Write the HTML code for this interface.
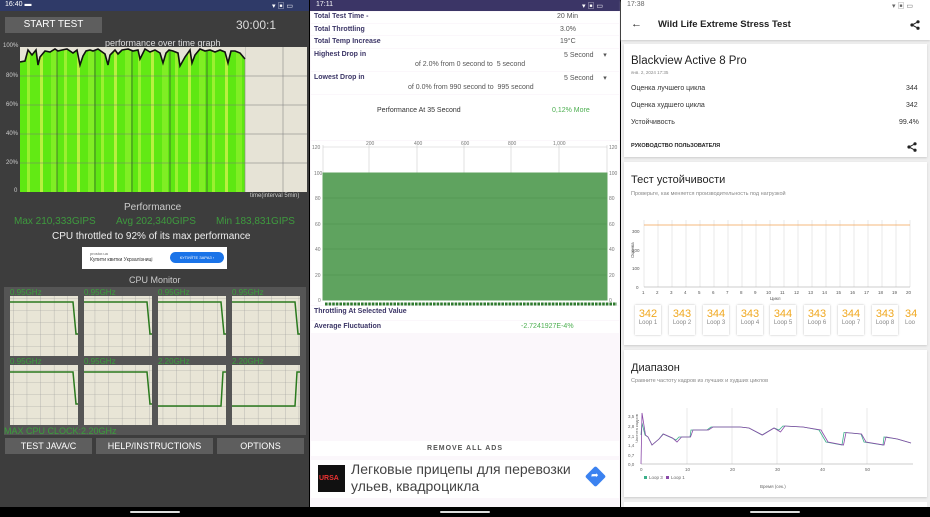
<!DOCTYPE html>
<html><head><meta charset="utf-8"><style>
*{margin:0;padding:0;box-sizing:border-box}
body{width:930px;height:517px;overflow:hidden;position:relative;font-family:"Liberation Sans","Noto Sans CJK SC",sans-serif;background:#000}
.a{position:absolute;white-space:nowrap}
</style></head><body>
<!-- LEFT PANEL -->
<div class="a" style="left:0;top:0;width:309px;height:507px;background:#3d3d3d"></div>
<div class="a" style="left:0;top:0;width:309px;height:11px;background:#2f3a68"></div>
<div class="a" style="left:5px;top:1px;font-size:7px;color:#fff">16:40 ▬</div>
<div class="a" style="left:272px;top:1px;font-size:7px;color:#fff">▾ ▣ ▭</div>
<div class="a" style="left:5px;top:17px;width:97px;height:16px;background:#5e5e5e;color:#fff;font-size:10px;text-align:center;line-height:16px">START TEST</div>
<div class="a" style="left:236px;top:18px;font-size:12px;color:#ddd">30:00:1</div>
<div class="a" style="left:105px;top:38px;font-size:9px;color:#ddd">performance over time graph</div>
<div class="a" style="left:20px;top:47px;width:287px;height:145px;background:#e6e3d6"></div>
<div class="a" style="left:20px;top:47px;width:225px;height:145px;background:repeating-linear-gradient(90deg,#5ee812 0 7px,#9af030 7px 10px,#62ea14 10px 20px,#b8f040 20px 23px,#5ee812 23px 31px,#80ee24 31px 37px)"></div>
<svg class="a" style="left:20px;top:47px" width="287" height="145">
<g stroke="#777" stroke-width="0.5"><line x1="0" y1="29" x2="287" y2="29"/><line x1="0" y1="58" x2="287" y2="58"/><line x1="0" y1="87" x2="287" y2="87"/><line x1="0" y1="116" x2="287" y2="116"/></g>
<g stroke="#333" stroke-width="0.6"><line x1="37" y1="0" x2="37" y2="145"/><line x1="75" y1="0" x2="75" y2="145"/><line x1="112" y1="0" x2="112" y2="145"/><line x1="150" y1="0" x2="150" y2="145"/><line x1="187" y1="0" x2="187" y2="145"/></g>
<g stroke="#888" stroke-width="0.6"><line x1="225" y1="0" x2="225" y2="145"/><line x1="263" y1="0" x2="263" y2="145"/></g>
<polygon fill="#e6e3d6" points="0,0 0,15 5,14 8,3 12,8 16,3 18,18 20,10 25,4 30,5 35,2 38,4 42,3 47,2 53,6 57,3 60,18 63,9 66,4 70,3 73,4 78,2 85,7 88,18 90,8 95,3 98,7 102,3 108,2 113,4 118,3 120,12 125,2 130,5 135,3 140,6 143,16 146,6 149,3 153,4 158,6 160,19 165,10 170,3 172,16 175,8 180,2 185,4 190,3 195,5 200,3 205,5 208,16 211,4 215,4 220,6 225,12 225,0"/>
<polyline fill="none" stroke="#111" stroke-width="1.6" points="0,15 5,14 8,3 12,8 16,3 18,18 20,10 25,4 30,5 35,2 38,4 42,3 47,2 53,6 57,3 60,18 63,9 66,4 70,3 73,4 78,2 85,7 88,18 90,8 95,3 98,7 102,3 108,2 113,4 118,3 120,12 125,2 130,5 135,3 140,6 143,16 146,6 149,3 153,4 158,6 160,19 165,10 170,3 172,16 175,8 180,2 185,4 190,3 195,5 200,3 205,5 208,16 211,4 215,4 220,6 225,12"/>
</svg>
<div class="a" style="left:3px;top:43px;font-size:6px;color:#ccc">100%</div>
<div class="a" style="left:6px;top:73px;font-size:6px;color:#ccc">80%</div>
<div class="a" style="left:6px;top:102px;font-size:6px;color:#ccc">60%</div>
<div class="a" style="left:6px;top:131px;font-size:6px;color:#ccc">40%</div>
<div class="a" style="left:6px;top:160px;font-size:6px;color:#ccc">20%</div>
<div class="a" style="left:14px;top:188px;font-size:6px;color:#ccc">0</div>
<div class="a" style="left:250px;top:193px;font-size:6px;color:#ccc">time(interval 5min)</div>
<div class="a" style="left:124px;top:202px;font-size:10px;color:#ccc">Performance</div>
<div class="a" style="left:14px;top:216px;font-size:10px;color:#3e9a3e">Max 210,333GIPS</div>
<div class="a" style="left:116px;top:216px;font-size:10px;color:#3e9a3e">Avg 202,340GIPS</div>
<div class="a" style="left:216px;top:216px;font-size:10px;color:#3e9a3e">Min 183,831GIPS</div>
<div class="a" style="left:52px;top:231px;font-size:10px;color:#eee">CPU throttled to 92% of its max performance</div>
<div class="a" style="left:82px;top:247px;width:145px;height:22px;background:#fff"></div>
<div class="a" style="left:90px;top:251px;font-size:4px;color:#666">prostor.ua</div>
<div class="a" style="left:90px;top:257px;font-size:5px;color:#333">Купити квитки Укрзалізниці</div>
<div class="a" style="left:170px;top:252px;width:54px;height:11px;background:#1a73e8;border-radius:6px;color:#fff;font-size:4px;text-align:center;line-height:11px">КУПУЙТЕ ЗАРАЗ ›</div>
<div class="a" style="left:129px;top:275px;font-size:9px;color:#ccc">CPU Monitor</div>
<div class="a" style="left:4px;top:287px;width:302px;height:148px;background:#555"></div>
<svg class="a" style="left:0;top:287px" width="309" height="148">
<defs><pattern id="g" width="13.6" height="12" patternUnits="userSpaceOnUse"><rect width="13.6" height="12" fill="#e8e5d6"/><path d="M13.6 0V12M0 12H13.6" stroke="#999" stroke-width="0.6"/></pattern></defs>
<g>
<rect x="10" y="9" width="68" height="60" fill="url(#g)"/><rect x="84" y="9" width="68" height="60" fill="url(#g)"/><rect x="158" y="9" width="68" height="60" fill="url(#g)"/><rect x="232" y="9" width="68" height="60" fill="url(#g)"/>
<rect x="10" y="78" width="68" height="60" fill="url(#g)"/><rect x="84" y="78" width="68" height="60" fill="url(#g)"/><rect x="158" y="78" width="68" height="60" fill="url(#g)"/><rect x="232" y="78" width="68" height="60" fill="url(#g)"/>
</g>
<g fill="none" stroke="#2a7a1e" stroke-width="1.5">
<polyline points="10,15 73,15 76,47 78,47"/><polyline points="84,15 147,15 150,47 152,47"/><polyline points="158,15 221,15 224,47 226,47"/><polyline points="232,15 295,15 298,47 300,47"/>
<polyline points="10,85 73,85 76,117 78,117"/><polyline points="84,85 147,85 150,117 152,117"/><polyline points="158,119 221,119 223,85 226,85"/><polyline points="232,119 295,119 297,85 300,85"/>
</g>
<g font-size="8" fill="#3aa03a" font-family="Liberation Sans"><text x="10" y="8">0.95GHz</text><text x="84" y="8">0.95GHz</text><text x="158" y="8">0.95GHz</text><text x="232" y="8">0.95GHz</text>
<text x="10" y="77">0.95GHz</text><text x="84" y="77">0.95GHz</text><text x="158" y="77">2.20GHz</text><text x="232" y="77">2.20GHz</text>
<text x="4" y="147" font-size="9">MAX CPU CLOCK:2.20GHz</text></g>
</svg>
<div class="a" style="left:5px;top:438px;width:87px;height:16px;background:#5e5e5e;color:#fff;font-size:9px;text-align:center;line-height:16px">TEST JAVA/C</div>
<div class="a" style="left:96px;top:438px;width:117px;height:16px;background:#5e5e5e;color:#fff;font-size:9px;text-align:center;line-height:16px">HELP/INSTRUCTIONS</div>
<div class="a" style="left:217px;top:438px;width:87px;height:16px;background:#5e5e5e;color:#fff;font-size:9px;text-align:center;line-height:16px">OPTIONS</div>
<div class="a" style="left:0;top:507px;width:309px;height:10px;background:#000"></div>
<div class="a" style="left:130px;top:511px;width:50px;height:2px;background:#ddd;border-radius:1px"></div>

<!-- MIDDLE PANEL -->
<div class="a" style="left:310px;top:0;width:310px;height:507px;background:#fbf7fb"></div>
<div class="a" style="left:310px;top:0;width:310px;height:11px;background:#3b3566"></div>
<div class="a" style="left:316px;top:1px;font-size:7px;color:#fff">17:11</div>
<div class="a" style="left:582px;top:1px;font-size:7px;color:#fff">▾ ▣ ▭</div>
<div class="a" style="left:311px;top:12px;width:308px;height:11px;background:#fff"></div>
<div class="a" style="left:311px;top:24px;width:308px;height:11px;background:#fff"></div>
<div class="a" style="left:311px;top:36px;width:308px;height:12px;background:#fff"></div>
<div class="a" style="left:311px;top:49px;width:308px;height:22px;background:#fff"></div>
<div class="a" style="left:311px;top:72px;width:308px;height:22px;background:#fff"></div>
<div class="a" style="left:311px;top:95px;width:308px;height:45px;background:#fff"></div>
<div class="a" style="left:311px;top:141px;width:308px;height:164px;background:#fff"></div>
<div class="a" style="left:311px;top:306px;width:308px;height:14px;background:#fff"></div>
<div class="a" style="left:311px;top:321px;width:308px;height:12px;background:#fff"></div>
<div style="font-size:7px;color:#3b3566;font-weight:bold">
<div class="a" style="left:314px;top:13px">Total Test Time -</div>
<div class="a" style="left:314px;top:26px">Total Throttling</div>
<div class="a" style="left:314px;top:38px">Total Temp Increase</div>
<div class="a" style="left:314px;top:51px">Highest Drop in</div>
<div class="a" style="left:314px;top:74px">Lowest Drop in</div>
<div class="a" style="left:314px;top:308px">Throttling At Selected Value</div>
<div class="a" style="left:314px;top:323px">Average Fluctuation</div>
</div>
<div style="font-size:7px;color:#555">
<div class="a" style="left:557px;top:13px">20 Min</div>
<div class="a" style="left:560px;top:26px">3.0%</div>
<div class="a" style="left:560px;top:38px">19°C</div>
<div class="a" style="left:564px;top:51px">5 Second &nbsp;&nbsp;&nbsp;&nbsp;▾</div>
<div class="a" style="left:415px;top:61px">of 2.0% from 0 second to &nbsp;5 second</div>
<div class="a" style="left:564px;top:74px">5 Second &nbsp;&nbsp;&nbsp;&nbsp;▾</div>
<div class="a" style="left:408px;top:84px">of 0.0% from 990 second to &nbsp;995 second</div>
<div class="a" style="left:377px;top:107px;color:#333">Performance At 35 Second</div>
<div class="a" style="left:552px;top:107px;color:#4caf50">0,12% More</div>
<div class="a" style="left:521px;top:323px;color:#4caf50">-2.7241927E-4%</div>
</div>
<svg class="a" style="left:310px;top:140px" width="310" height="170" font-family="Liberation Sans" font-size="5" fill="#777">
<rect x="13" y="33" width="284" height="127" fill="#5fa35f"/>
<path d="M13 7H297" stroke="#ccc" stroke-width="0.5" fill="none"/>
<path d="M13 58H297M13 84H297M13 109H297M13 135H297" stroke="#4a8f4a" stroke-width="0.5"/>
<path d="M13 5V160M59 5V33M107 5V33M154 5V33M201 5V33M249 5V33M297 5V160" stroke="#ccc" stroke-width="0.6"/>
<rect x="13" y="33" width="284" height="127" fill="none" stroke="#5fa35f"/>
<path d="M15 164H307" stroke="#2e7a2e" stroke-width="3" stroke-dasharray="2.6 1"/>
<text x="2" y="9">120</text><text x="4" y="35">100</text><text x="5" y="60">80</text><text x="5" y="86">60</text><text x="5" y="111">40</text><text x="5" y="137">20</text><text x="8" y="162">0</text>
<text x="299" y="9">120</text><text x="299" y="35">100</text><text x="299" y="60">80</text><text x="299" y="86">60</text><text x="299" y="111">40</text><text x="299" y="137">20</text><text x="299" y="162">0</text>
<text x="56" y="5">200</text><text x="104" y="5">400</text><text x="151" y="5">600</text><text x="198" y="5">800</text><text x="243" y="5">1,000</text>
</svg>
<div class="a" style="left:311px;top:441px;width:308px;height:15px;background:#fff;font-size:7px;color:#555;text-align:center;line-height:15px;letter-spacing:1px;font-weight:bold">REMOVE ALL ADS</div>
<div class="a" style="left:311px;top:460px;width:308px;height:38px;background:#fff"></div>
<div class="a" style="left:318px;top:465px;width:27px;height:27px;background:#111"></div>
<div class="a" style="left:319px;top:475px;font-size:7px;color:#e33;font-weight:bold">URSA</div>
<div class="a" style="left:351px;top:461px;font-size:14px;color:#444;line-height:17px">Легковые прицепы для перевозки<br>ульев, квадроцикла</div>
<div class="a" style="left:588px;top:469px;width:15px;height:15px;background:#3b82f0;transform:rotate(45deg);border-radius:2px"></div>
<div class="a" style="left:591px;top:470px;font-size:9px;color:#fff">➦</div>
<div class="a" style="left:310px;top:507px;width:310px;height:10px;background:#000"></div>
<div class="a" style="left:440px;top:511px;width:50px;height:2px;background:#ddd;border-radius:1px"></div>

<!-- RIGHT PANEL -->
<div class="a" style="left:621px;top:0;width:309px;height:507px;background:#efefef"></div>
<div class="a" style="left:621px;top:0;width:309px;height:40px;background:#fff;box-shadow:0 1px 2px #ccc"></div>
<div class="a" style="left:627px;top:1px;font-size:7px;color:#666">17:38</div>
<div class="a" style="left:892px;top:1px;font-size:7px;color:#666">▾ ▣ ▭</div>
<div class="a" style="left:631px;top:18px;font-size:11px;color:#222">←</div>
<div class="a" style="left:658px;top:19px;font-size:9.5px;color:#222;font-weight:bold">Wild Life Extreme Stress Test</div>
<svg class="a" style="left:910px;top:20px" width="10" height="10"><g fill="#222"><circle cx="8" cy="1.8" r="1.6"/><circle cx="2" cy="5" r="1.6"/><circle cx="8" cy="8.2" r="1.6"/></g><path d="M8 1.8L2 5L8 8.2" stroke="#222" fill="none"/></svg>
<div class="a" style="left:624px;top:44px;width:303px;height:113px;background:#fff;box-shadow:0 1px 2px #ccc"></div>
<div class="a" style="left:631px;top:55px;font-size:11.5px;color:#222">Blackview Active 8 Pro</div>
<div class="a" style="left:631px;top:70px;font-size:4.5px;color:#888">янв. 2, 2024 17:35</div>
<div class="a" style="left:631px;top:85px;font-size:7px;color:#333">Оценка лучшего цикла</div>
<div class="a" style="left:906px;top:85px;font-size:7px;color:#333">344</div>
<div class="a" style="left:631px;top:102px;font-size:7px;color:#333">Оценка худшего цикла</div>
<div class="a" style="left:906px;top:102px;font-size:7px;color:#333">342</div>
<div class="a" style="left:631px;top:119px;font-size:7px;color:#333">Устойчивость</div>
<div class="a" style="left:899px;top:119px;font-size:7px;color:#333">99.4%</div>
<div class="a" style="left:631px;top:143px;font-size:5.5px;color:#222;font-weight:bold">РУКОВОДСТВО ПОЛЬЗОВАТЕЛЯ</div>
<svg class="a" style="left:907px;top:142px" width="10" height="10"><g fill="#222"><circle cx="8" cy="1.8" r="1.6"/><circle cx="2" cy="5" r="1.6"/><circle cx="8" cy="8.2" r="1.6"/></g><path d="M8 1.8L2 5L8 8.2" stroke="#222" fill="none"/></svg>
<div class="a" style="left:624px;top:162px;width:303px;height:183px;background:#fff;box-shadow:0 1px 2px #ccc"></div>
<div class="a" style="left:631px;top:174px;font-size:11px;color:#222">Тест устойчивости</div>
<div class="a" style="left:631px;top:191px;font-size:5.5px;color:#888">Проверьте, как меняется производительность под нагрузкой</div>
<svg class="a" style="left:621px;top:215px" width="309" height="90" font-family="Liberation Sans" font-size="4.5" fill="#555">
<g stroke="#ddd" stroke-width="0.6">
<path d="M23 5V72M37 5V72M51 5V72M65 5V72M79 5V72M93 5V72M107 5V72M121 5V72M135 5V72M149 5V72M163 5V72M177 5V72M191 5V72M205 5V72M219 5V72M233 5V72M247 5V72M261 5V72M275 5V72M289 5V72"/>
</g>
<path d="M23 72H289" stroke="#999" stroke-width="0.6"/>
<path d="M23 10H289" stroke="#f0a050" stroke-width="0.8"/>
<text x="11" y="18">300</text><text x="11" y="37">200</text><text x="11" y="55">100</text><text x="15" y="74">0</text>
<text x="5" y="45" transform="rotate(-90 8 40)">Оценка</text>
<g><text x="21" y="79">1</text><text x="35" y="79">2</text><text x="49" y="79">3</text><text x="63" y="79">4</text><text x="77" y="79">5</text><text x="91" y="79">6</text><text x="105" y="79">7</text><text x="119" y="79">8</text><text x="133" y="79">9</text><text x="145" y="79">10</text><text x="159" y="79">11</text><text x="173" y="79">12</text><text x="187" y="79">13</text><text x="201" y="79">14</text><text x="215" y="79">15</text><text x="229" y="79">16</text><text x="243" y="79">17</text><text x="257" y="79">18</text><text x="271" y="79">19</text><text x="285" y="79">20</text></g>
<text x="149" y="85">Цикл</text>
</svg>
<div style="font-family:'Liberation Sans',sans-serif">
<div class="a" style="left:635px;top:305px;width:26px;height:30px;background:#fff;box-shadow:0 0 2px #bbb;text-align:center"><div style="font-size:11px;color:#f0a820;margin-top:3px">342</div><div style="font-size:6px;color:#888">Loop 1</div></div>
<div class="a" style="left:669px;top:305px;width:26px;height:30px;background:#fff;box-shadow:0 0 2px #bbb;text-align:center"><div style="font-size:11px;color:#f0a820;margin-top:3px">343</div><div style="font-size:6px;color:#888">Loop 2</div></div>
<div class="a" style="left:703px;top:305px;width:26px;height:30px;background:#fff;box-shadow:0 0 2px #bbb;text-align:center"><div style="font-size:11px;color:#f0a820;margin-top:3px">344</div><div style="font-size:6px;color:#888">Loop 3</div></div>
<div class="a" style="left:737px;top:305px;width:26px;height:30px;background:#fff;box-shadow:0 0 2px #bbb;text-align:center"><div style="font-size:11px;color:#f0a820;margin-top:3px">343</div><div style="font-size:6px;color:#888">Loop 4</div></div>
<div class="a" style="left:770px;top:305px;width:26px;height:30px;background:#fff;box-shadow:0 0 2px #bbb;text-align:center"><div style="font-size:11px;color:#f0a820;margin-top:3px">344</div><div style="font-size:6px;color:#888">Loop 5</div></div>
<div class="a" style="left:804px;top:305px;width:26px;height:30px;background:#fff;box-shadow:0 0 2px #bbb;text-align:center"><div style="font-size:11px;color:#f0a820;margin-top:3px">343</div><div style="font-size:6px;color:#888">Loop 6</div></div>
<div class="a" style="left:838px;top:305px;width:26px;height:30px;background:#fff;box-shadow:0 0 2px #bbb;text-align:center"><div style="font-size:11px;color:#f0a820;margin-top:3px">344</div><div style="font-size:6px;color:#888">Loop 7</div></div>
<div class="a" style="left:872px;top:305px;width:26px;height:30px;background:#fff;box-shadow:0 0 2px #bbb;text-align:center"><div style="font-size:11px;color:#f0a820;margin-top:3px">343</div><div style="font-size:6px;color:#888">Loop 8</div></div>
<div class="a" style="left:905px;top:305px;width:15px;height:30px;background:#fff;overflow:hidden;text-align:left"><div style="font-size:11px;color:#f0a820;margin-top:3px">34</div><div style="font-size:6px;color:#888">Loo</div></div>
</div>
<div class="a" style="left:624px;top:350px;width:303px;height:147px;background:#fff;box-shadow:0 1px 2px #ccc"></div>
<div class="a" style="left:631px;top:362px;font-size:11px;color:#222">Диапазон</div>
<div class="a" style="left:631px;top:378px;font-size:5.5px;color:#888">Сравните частоту кадров из лучших и худших циклов</div>
<svg class="a" style="left:621px;top:405px" width="309" height="90" font-family="Liberation Sans" font-size="4.5" fill="#666">
<path d="M66 3V59M111 3V59M156 3V59M201 3V59M246 3V59" stroke="#ddd" stroke-width="0.6"/>
<path d="M20 59H292" stroke="#999" stroke-width="0.6"/>
<polyline fill="none" stroke="#3bb08a" stroke-width="0.8" points="20,30 21,18 24,30 27,32 31,40 38,34 42,29 51,33 55,35 58,32 69,32 70,25 86,25 90,22 119,22 128,23 141,30 153,23 158,25 162,21 182,22 198,25 205,37 221,40 223,27.5 240,29 243,37 262,40 263,32 276,34 290,38"/>
<polyline fill="none" stroke="#8a4aa8" stroke-width="0.8" points="20,59 21,8 24.5,30 27,32 31,40 38,34 42.5,29 51.5,33 56,37 60.5,32 69.5,32 72,25 87.5,25 92,22 119,22 128,23 141.5,30 153,23 159.5,27 164,21 182,22 200,25 207,37 222.5,40 225,27.5 240.5,29 245,37 263,40 265,32 276.5,34 290,38"/>
<text x="7" y="13">3,5</text><text x="7" y="23">2,8</text><text x="7" y="33">2,1</text><text x="7" y="42">1,4</text><text x="7" y="52">0,7</text><text x="7" y="61">0,0</text>
<text x="4" y="45" transform="rotate(-90 7 35)" font-size="4">Частота кадров</text>
<text x="19" y="66">0</text><text x="64" y="66">10</text><text x="109" y="66">20</text><text x="154" y="66">30</text><text x="199" y="66">40</text><text x="244" y="66">50</text>
<rect x="23" y="71" width="3" height="3" fill="#3bb08a"/><text x="28" y="74">Loop 3</text><rect x="45" y="71" width="3" height="3" fill="#8a4aa8"/><text x="50" y="74">Loop 1</text>
<text x="139" y="83">Время (сек.)</text>
</svg>
<div class="a" style="left:624px;top:502px;width:303px;height:5px;background:#fff"></div>
<div class="a" style="left:621px;top:507px;width:309px;height:10px;background:#000"></div>
<div class="a" style="left:750px;top:511px;width:50px;height:2px;background:#ddd;border-radius:1px"></div>
</body></html>
